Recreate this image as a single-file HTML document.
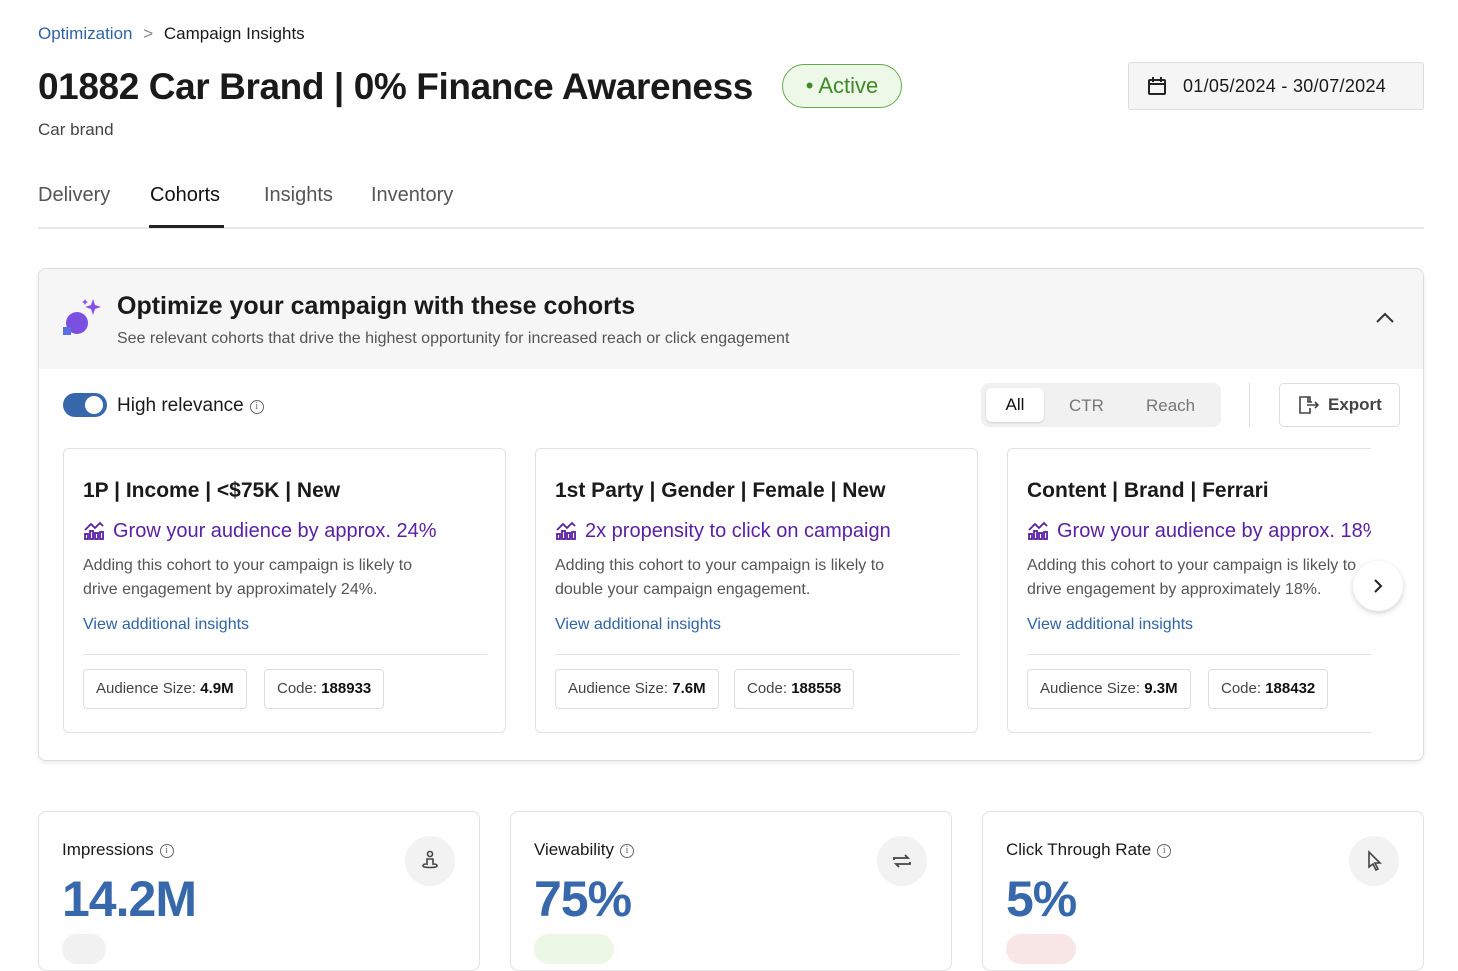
<!DOCTYPE html>
<html><head><meta charset="utf-8"><style>
*{box-sizing:border-box;margin:0;padding:0}
body{width:1458px;height:946px;overflow:hidden;background:#fff;font-family:"Liberation Sans",sans-serif;color:#1a1a1a;position:relative}
.abs{position:absolute}
.crumb{left:38px;top:24px;font-size:17px}
.crumb a{color:#2f63a8;text-decoration:none}
h1{left:38px;top:66px;font-size:37px;font-weight:bold;letter-spacing:-0.4px;white-space:nowrap}
.badge{left:782px;top:64px;width:120px;height:44px;border:1.5px solid #66a94a;border-radius:22px;background:#eef8e9;color:#3f8a26;font-size:22px;line-height:41px;text-align:center}
.sub{left:38px;top:120px;font-size:17px;color:#444}
.date{left:1128px;top:62px;width:296px;height:48px;border:1px solid #ddd;background:#f5f5f5;border-radius:3px;font-size:18px;line-height:46px;padding-left:54px;letter-spacing:0.3px}
.tabs{left:38px;top:184px;font-size:20px;color:#555}
.tabs span{position:absolute;white-space:nowrap}
.tabline{left:38px;top:227px;width:1386px;height:2px;background:#e8e8e8}
.panel{left:38px;top:268px;width:1386px;height:493px;border:1px solid #ddd;border-radius:8px;box-shadow:0 2px 4px rgba(0,0,0,.08);overflow:hidden}
.phead{position:absolute;left:0;top:0;width:100%;height:100px;background:#f6f6f6}
.card{position:absolute;top:179px;width:443px;height:285px;border:1px solid #e2e2e2;border-radius:6px;background:#fff}
.card h3{position:absolute;left:19px;top:30px;font-size:21px;font-weight:bold;white-space:nowrap}
.card .g{position:absolute;left:19px;top:71px;font-size:20px;color:#5a1fa5;white-space:nowrap}
.card .g svg{vertical-align:-3px;margin-right:6px}
.card p{position:absolute;left:19px;top:105px;width:400px;font-size:16px;line-height:24px;color:#555;white-space:nowrap}
.card .v{position:absolute;left:19px;top:167px;font-size:16px;color:#2f63a8}
.card .hr{position:absolute;left:19px;top:205px;width:404px;height:1px;background:#e2e2e2}
.chip{position:absolute;top:220px;height:40px;border:1px solid #ddd;border-radius:4px;font-size:15px;line-height:38px;padding:0 12px;color:#444;white-space:nowrap}
.chip b{color:#111}
.metric{position:absolute;top:811px;width:442px;height:160px;border:1px solid #e2e2e2;border-radius:8px}
.metric .t{position:absolute;left:23px;top:28px;font-size:17px}
.metric .n{position:absolute;left:23px;top:58px;font-size:50px;font-weight:bold;color:#3768ac;letter-spacing:-1px}
.metric .ic{position:absolute;right:24px;top:24px;width:50px;height:50px;border-radius:25px;background:#f2f2f2}
.metric .pill{position:absolute;left:23px;top:122px;width:44px;height:30px;border-radius:15px}
.info{display:inline-block;width:14px;height:14px;border:1.3px solid #666;border-radius:50%;font-size:10px;line-height:12px;text-align:center;color:#666;vertical-align:2px;margin-left:6px;font-family:"Liberation Serif",serif}
</style></head><body>
<div class="abs crumb"><a>Optimization</a> <span style="color:#888;margin:0 6px">&gt;</span> Campaign Insights</div>
<h1 class="abs">01882 Car Brand | 0% Finance Awareness</h1>
<div class="abs badge">• Active</div>
<div class="abs sub">Car brand</div>
<div class="abs date"><svg class="abs" style="left:18px;top:13px" width="20" height="20" viewBox="0 0 20 20" fill="none" stroke="#222" stroke-width="2"><rect x="2" y="4" width="16" height="14" rx="1"/><path d="M2 8h16M6 1v5M14 1v5"/></svg>01/05/2024 - 30/07/2024</div>
<div class="abs tabs"><span style="left:0">Delivery</span><span style="left:112px;color:#111">Cohorts</span><span style="left:226px">Insights</span><span style="left:333px">Inventory</span></div>
<div class="abs tabline"></div>
<div class="abs" style="left:149px;top:225px;width:75px;height:3px;background:#222"></div>

<div class="abs panel">
 <div class="phead">
  <svg class="abs" style="left:22px;top:28px" width="42" height="42" viewBox="0 0 42 42"><circle cx="16" cy="26" r="11" fill="#7b4fe0"/><path d="M2 30h8v8H2z" fill="#5b6fe0"/><path d="M32 2l2 6 6 2-6 2-2 6-2-6-6-2 6-2z" fill="#8a4fe8"/><path d="M24 2l1 2 2 1-2 1-1 2-1-2-2-1 2-1z" fill="#8a4fe8"/></svg>
  <div class="abs" style="left:78px;top:23px;font-size:25px;font-weight:bold;white-space:nowrap">Optimize your campaign with these cohorts</div>
  <div class="abs" style="left:78px;top:61px;font-size:16px;color:#555;white-space:nowrap">See relevant cohorts that drive the highest opportunity for increased reach or click engagement</div>
  <svg class="abs" style="left:1336px;top:42px" width="20" height="14" viewBox="0 0 20 14" fill="none" stroke="#333" stroke-width="2"><path d="M2 11l8-8 8 8"/></svg>
 </div>
 <div class="abs" style="left:24px;top:124px;width:44px;height:24px;border-radius:12px;background:#3768ac"><div class="abs" style="left:22px;top:3px;width:18px;height:18px;border-radius:9px;background:#fff"></div></div>
 <div class="abs" style="left:78px;top:126px;font-size:19px">High relevance<span class="info">i</span></div>
 <div class="abs" style="left:942px;top:114px;width:240px;height:44px;border-radius:8px;background:#f1f1f1;font-size:17px;color:#777">
  <div class="abs" style="left:5px;top:5px;width:58px;height:34px;border-radius:6px;background:#fff;box-shadow:0 1px 2px rgba(0,0,0,.15);color:#111;text-align:center;line-height:34px">All</div>
  <span class="abs" style="left:88px;top:13px">CTR</span><span class="abs" style="left:165px;top:13px">Reach</span>
 </div>
 <div class="abs" style="left:1210px;top:114px;width:1px;height:44px;background:#ddd"></div>
 <div class="abs" style="left:1240px;top:114px;width:121px;height:44px;border:1px solid #ddd;border-radius:5px;font-size:17px;font-weight:bold;color:#444;line-height:42px;padding-left:48px">
  <svg class="abs" style="left:18px;top:12px" width="22" height="18" viewBox="0 0 22 18" fill="none" stroke="#444" stroke-width="1.6"><path d="M12 6V1H2v16h10v-5M10 1v5h4M9 9h11M17 6l3 3-3 3"/></svg>Export</div>

 <div class="card" style="left:24px"><h3>1P | Income | &lt;$75K | New</h3>
  <div class="g"><svg width="24" height="20" viewBox="0 0 24 20" fill="none" stroke="#5a1fa5" stroke-width="1.8"><path d="M2 10l6-6 4 4 5-5 3 3"/><rect x="2" y="14" width="3" height="5"/><rect x="7" y="11" width="3" height="8"/><rect x="12" y="13" width="3" height="6"/><rect x="17" y="12" width="3" height="7"/></svg>Grow your audience by approx. 24%</div>
  <p>Adding this cohort to your campaign is likely to<br>drive engagement by approximately 24%.</p>
  <div class="v">View additional insights</div><div class="hr"></div>
  <div class="chip" style="left:19px">Audience Size: <b>4.9M</b></div><div class="chip" style="left:200px">Code: <b>188933</b></div></div>
 <div class="card" style="left:496px"><h3>1st Party | Gender | Female | New</h3>
  <div class="g"><svg width="24" height="20" viewBox="0 0 24 20" fill="none" stroke="#5a1fa5" stroke-width="1.8"><path d="M2 10l6-6 4 4 5-5 3 3"/><rect x="2" y="14" width="3" height="5"/><rect x="7" y="11" width="3" height="8"/><rect x="12" y="13" width="3" height="6"/><rect x="17" y="12" width="3" height="7"/></svg>2x propensity to click on campaign</div>
  <p>Adding this cohort to your campaign is likely to<br>double your campaign engagement.</p>
  <div class="v">View additional insights</div><div class="hr"></div>
  <div class="chip" style="left:19px">Audience Size: <b>7.6M</b></div><div class="chip" style="left:198px">Code: <b>188558</b></div></div>
 <div class="abs" style="left:968px;top:179px;width:364px;height:285px;overflow:hidden">
 <div class="card" style="left:0;top:0;width:443px"><h3>Content | Brand | Ferrari</h3>
  <div class="g"><svg width="24" height="20" viewBox="0 0 24 20" fill="none" stroke="#5a1fa5" stroke-width="1.8"><path d="M2 10l6-6 4 4 5-5 3 3"/><rect x="2" y="14" width="3" height="5"/><rect x="7" y="11" width="3" height="8"/><rect x="12" y="13" width="3" height="6"/><rect x="17" y="12" width="3" height="7"/></svg>Grow your audience by approx. 18%</div>
  <p>Adding this cohort to your campaign is likely to<br>drive engagement by approximately 18%.</p>
  <div class="v">View additional insights</div><div class="hr"></div>
  <div class="chip" style="left:19px">Audience Size: <b>9.3M</b></div><div class="chip" style="left:200px">Code: <b>188432</b></div></div>
 </div>
 <div class="abs" style="left:1314px;top:292px;width:50px;height:50px;border-radius:25px;background:#fff;box-shadow:0 2px 6px rgba(0,0,0,.18)"><svg class="abs" style="left:18px;top:17px" width="14" height="16" viewBox="0 0 14 16" fill="none" stroke="#222" stroke-width="2"><path d="M4 2l6 6-6 6"/></svg></div>
</div>

<div class="metric" style="left:38px"><div class="t">Impressions<span class="info">i</span></div><div class="n">14.2M</div><div class="ic"><svg style="margin:13px" width="24" height="24" viewBox="0 0 24 24" fill="none" stroke="#444" stroke-width="1.6"><circle cx="12" cy="5" r="2.5"/><path d="M9 16v-6h6v6M5 17c0 2 14 2 14 0s-3-2-3-2M8 15s-3 0-3 2"/></svg></div><div class="pill" style="background:#f1f1f1"></div></div>
<div class="metric" style="left:510px"><div class="t">Viewability<span class="info">i</span></div><div class="n">75%</div><div class="ic"><svg style="margin:13px" width="24" height="24" viewBox="0 0 24 24" fill="none" stroke="#444" stroke-width="1.8"><path d="M4 11V9h14l-3-3M20 13v2H6l3 3"/></svg></div><div class="pill" style="background:#ecf7e6;width:80px"></div></div>
<div class="metric" style="left:982px"><div class="t">Click Through Rate<span class="info">i</span></div><div class="n">5%</div><div class="ic"><svg style="margin:13px" width="24" height="24" viewBox="0 0 24 24" fill="none" stroke="#444" stroke-width="1.6"><path d="M7 3v15l4-3 3 6 2-1-3-6h5z"/></svg></div><div class="pill" style="background:#f8e6e6;width:70px"></div></div>
</body></html>
